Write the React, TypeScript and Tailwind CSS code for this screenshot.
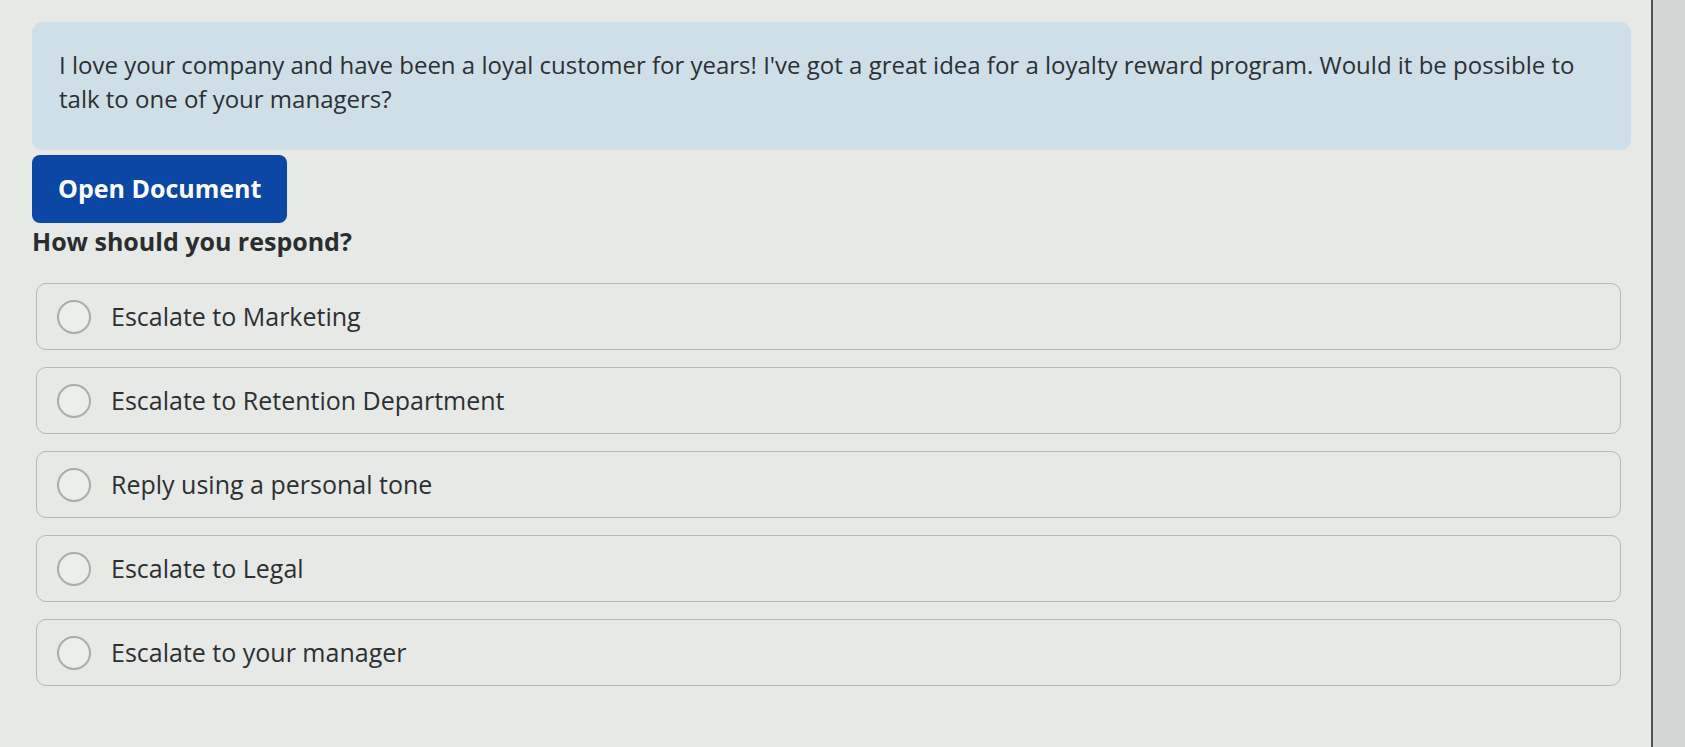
import React from 'react';

const options = [
  'Escalate to Marketing',
  'Escalate to Retention Department',
  'Reply using a personal tone',
  'Escalate to Legal',
  'Escalate to your manager',
];

export default function App() {
  return (
    <div
      className="flex h-[747px] w-full bg-[#e7e9e6] text-[#2c3033]"
      style={{ fontFamily: '"Open Sans", "Noto Sans", sans-serif' }}
    >
      <div className="flex-1 pl-[32px] pr-[20px] pt-[22px]">
        {/* Message */}
        <div className="rounded-[10px] bg-[#cedfe8] pl-[27px] pr-[30px] pt-[26px] pb-[34px] text-[24px] leading-[34px]">
          I love your company and have been a loyal customer for years! I've got a great idea for a loyalty reward
          program. Would it be possible to talk to one of your managers?
        </div>

        <button className="mt-[5px] h-[68px] rounded-[8px] bg-[#0c47a6] px-[26px] text-[25px] font-bold text-white">
          Open Document
        </button>

        <h2 className="text-[25px] font-bold leading-[36px] text-[#2a2d30]">How should you respond?</h2>

        {/* Choices */}
        <div className="mt-[24px] flex flex-col gap-[17px] pl-[4px] pr-[10px]">
          {options.map((o) => (
            <label
              key={o}
              className="flex h-[67px] items-center gap-[20px] rounded-[10px] border border-[#b5b9b7] px-[20px] text-[25px]"
            >
              <span className="h-[34px] w-[34px] shrink-0 rounded-full border-2 border-[#a9adab] bg-[#eceeeb]" />
              <span>{o}</span>
            </label>
          ))}
        </div>
      </div>

      {/* screen edge */}
      <div className="w-[34px] border-l-2 border-[#4a5450] bg-[#d3d8d6]" />
    </div>
  );
}
